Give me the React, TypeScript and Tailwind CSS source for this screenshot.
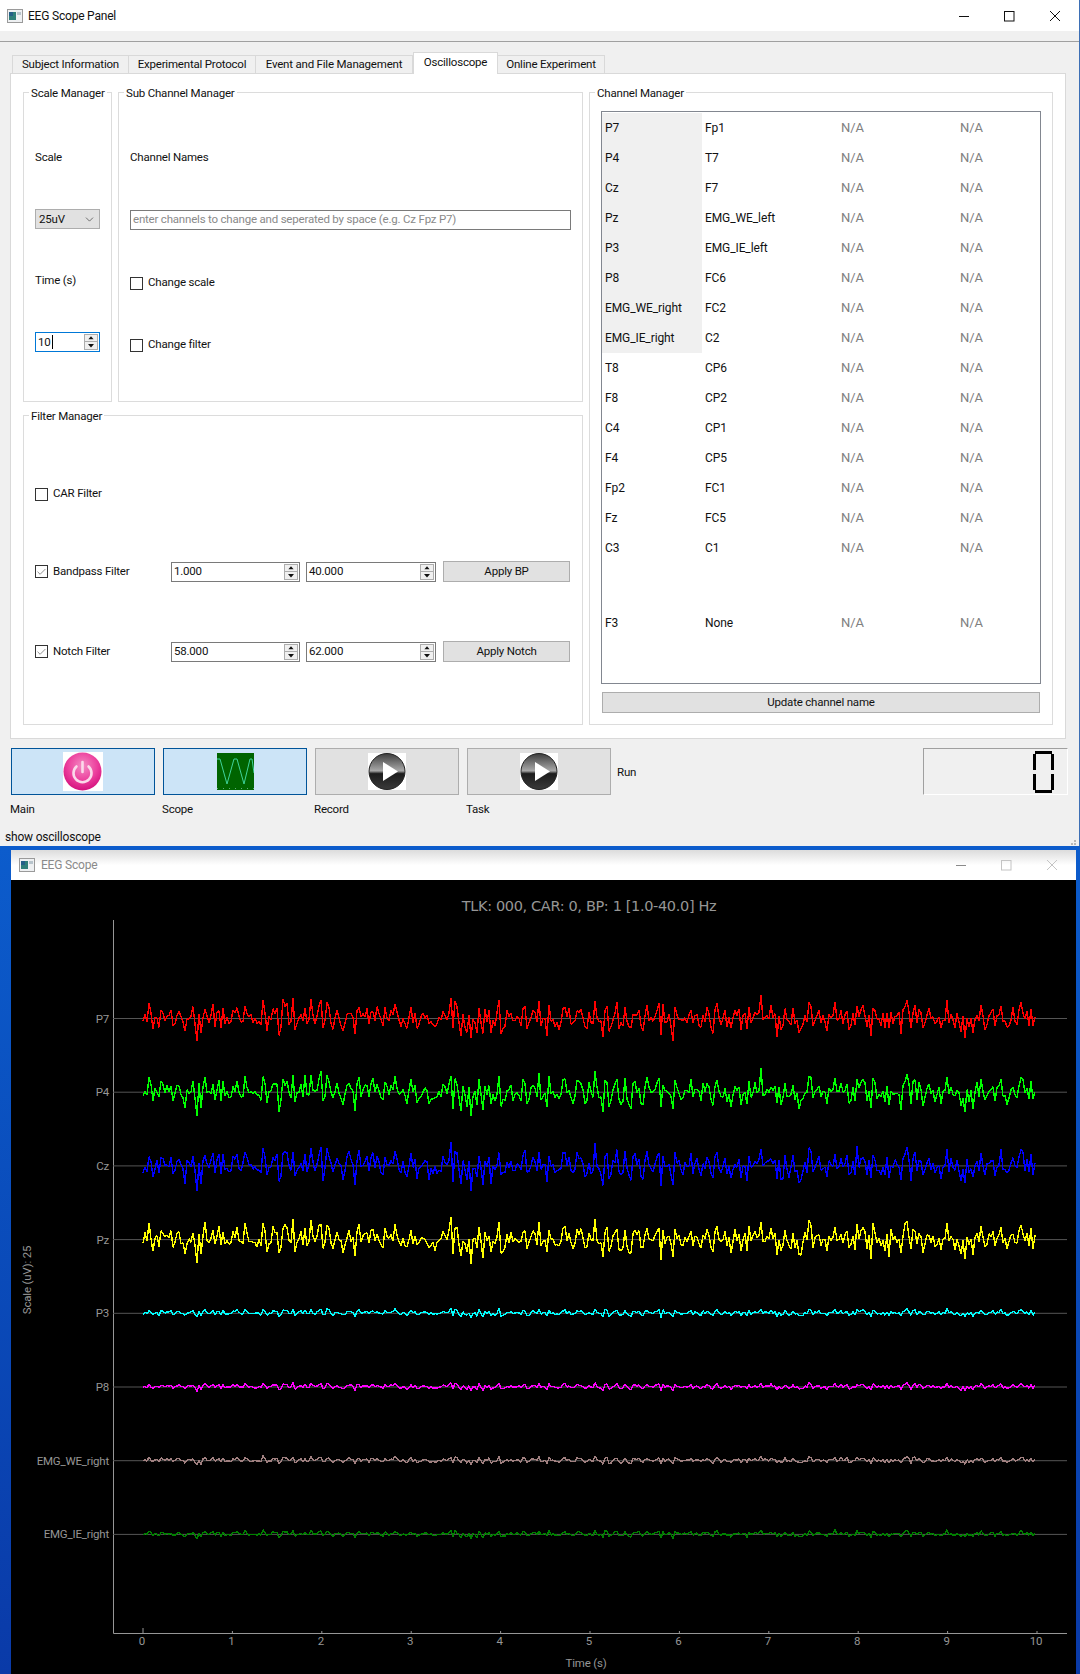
import { Check, ChevronDown } from 'lucide-react'

const channels = [
  ['P7', 'Fp1'], ['P4', 'T7'], ['Cz', 'F7'], ['Pz', 'EMG_WE_left'], ['P3', 'EMG_IE_left'], ['P8', 'FC6'],
  ['EMG_WE_right', 'FC2'], ['EMG_IE_right', 'C2'], ['T8', 'CP6'], ['F8', 'CP2'], ['C4', 'CP1'], ['F4', 'CP5'],
  ['Fp2', 'FC1'], ['Fz', 'FC5'], ['C3', 'C1'], ['F3', 'None'],
]

const traces = [
  { name: 'P7', color: '#ff0000', gain: 1, noise: 0.3 },
  { name: 'P4', color: '#00ff00', gain: 1, noise: 0.35 },
  { name: 'Cz', color: '#0000ff', gain: 1, noise: 0.35 },
  { name: 'Pz', color: '#ffff00', gain: 1, noise: 0.3 },
  { name: 'P3', color: '#00ffff', gain: 0.22, noise: 0.3 },
  { name: 'P8', color: '#ff00ff', gain: 0.2, noise: 0.3 },
  { name: 'EMG_WE_right', color: '#a08080', gain: 0.2, noise: 0.35 },
  { name: 'EMG_IE_right', color: '#008000', gain: 0.2, noise: 0.35 },
]

function rng(seed: number) {
  let a = seed
  return () => {
    a = (a + 0x6d2b79f5) | 0
    let t = Math.imul(a ^ (a >>> 15), 1 | a)
    t = (t + Math.imul(t ^ (t >>> 7), 61 | t)) ^ t
    return ((t ^ (t >>> 14)) >>> 0) / 4294967296
  }
}

function gauss(r: () => number) {
  return (r() + r() + r() + r() - 2) * 1.7
}

const base = (() => {
  const r = rng(11)
  const out: number[] = []
  for (let i = 0; i < 447; i++) {
    let v = gauss(r) * 8
    if (r() < 0.07) v += r() < 0.7 ? 13 : -10
    out.push(Math.max(-18, Math.min(23, v)))
  }
  return out
})()

function tracePoints(row: number, gain: number, noise: number) {
  const r = rng(100 + row)
  const y = 138 + row * 73.7
  return base
    .map((v, i) => `${132 + i * 2},${(y + (v + gauss(r) * 7 * noise) * gain).toFixed(1)}`)
    .join(' ')
}

function WindowIcon() {
  return (
    <svg width="16" height="14" viewBox="0 0 16 14" className="shrink-0">
      <rect x="0.5" y="0.5" width="15" height="13" fill="#eef0f2" stroke="#9a9a9a" />
      <rect x="2" y="3" width="7" height="8" fill="#2f7f7a" />
      <rect x="2" y="3" width="4" height="4" fill="#245f88" />
      <rect x="10" y="3" width="4" height="3" fill="#b8c4cc" />
    </svg>
  )
}

function WindowControls({ muted }: { muted?: boolean }) {
  const c = muted ? '#c4c4c4' : '#111111'
  return (
    <svg width="102" height="12" viewBox="0 0 102 12" className="shrink-0">
      <line x1="0" y1="6.5" x2="10" y2="6.5" stroke={muted ? '#8a8a8a' : c} />
      <rect x="45.5" y="1.5" width="9.5" height="9.5" fill="none" stroke={c} />
      <path d="M91 1l10 10M101 1L91 11" fill="none" stroke={c} />
    </svg>
  )
}

function GroupBox({ title, className, children }: { title: string; className: string; children: React.ReactNode }) {
  return (
    <div className={`relative border border-[#dcdcdc] ${className}`}>
      <span className="absolute -top-[8px] left-[5px] whitespace-nowrap bg-white px-[2px] leading-4">{title}</span>
      {children}
    </div>
  )
}

function CheckBox({ label, checked }: { label: string; checked?: boolean }) {
  return (
    <div className="flex items-center gap-[5px]">
      <span className="flex h-[13px] w-[13px] items-center justify-center border border-[#333333] bg-white">
        {checked && <Check size={12} strokeWidth={1.2} className="text-[#333333]" />}
      </span>
      <span>{label}</span>
    </div>
  )
}

function SpinBox({ value, className, focus }: { value: string; className: string; focus?: boolean }) {
  return (
    <div className={`flex h-5 items-center justify-between border pl-[2px] pr-[1px] ${focus ? 'border-[#0078d7]' : 'border-[#7a7a7a]'} ${className}`}>
      <span className="flex items-center">
        {value}
        {focus && <span className="ml-px h-[14px] w-px bg-black" />}
      </span>
      <span className="flex h-4 w-[14px] flex-col border border-[#adadad] bg-[#f0f0f0]">
        <svg viewBox="0 0 12 7" className="h-[7px] w-full border-b border-[#adadad]"><path d="M6 1.5l3 3.5H3z" fill="#111" /></svg>
        <svg viewBox="0 0 12 7" className="h-[7px] w-full"><path d="M6 5.5L3 2h6z" fill="#111" /></svg>
      </span>
    </div>
  )
}

function PushButton({ label, className }: { label: string; className: string }) {
  return <div className={`flex items-center justify-center border border-[#adadad] bg-[#e1e1e1] ${className}`}>{label}</div>
}

function PowerIcon() {
  return (
    <svg width="40" height="39" viewBox="0 0 40 39">
      <defs>
        <radialGradient id="pink" cx="50%" cy="35%" r="65%">
          <stop offset="0%" stopColor="#f48cc4" />
          <stop offset="60%" stopColor="#ec3f9d" />
          <stop offset="100%" stopColor="#d4127e" />
        </radialGradient>
      </defs>
      <rect width="40" height="39" fill="#ffffff" />
      <circle cx="19.5" cy="19.5" r="19" fill="url(#pink)" />
      <path d="M13.5 14.5a9 9 0 1 0 12 0" fill="none" stroke="#fbd9ea" strokeWidth="2.6" strokeLinecap="round" />
      <line x1="19.5" y1="10" x2="19.5" y2="20" stroke="#fbd9ea" strokeWidth="2.6" strokeLinecap="round" />
    </svg>
  )
}

function ScopeIcon() {
  return (
    <svg width="37" height="37" viewBox="0 0 37 37">
      <rect width="37" height="37" fill="#006400" />
      <path d="M0 6L3 6L10 31L17 6L20 6L27 31L33 6L35 6L37 20" fill="none" stroke="#3fd29a" strokeWidth="1" />
      <line x1="0" y1="35.5" x2="37" y2="35.5" stroke="#5da97a" strokeDasharray="1 5" />
    </svg>
  )
}

function PlayIcon({ id }: { id: string }) {
  return (
    <svg width="38" height="37" viewBox="0 0 38 37">
      <defs>
        <linearGradient id={id} x1="0" y1="0" x2="0" y2="1">
          <stop offset="0%" stopColor="#3c3c3c" />
          <stop offset="48%" stopColor="#a8a8a8" />
          <stop offset="56%" stopColor="#1c1c1c" />
          <stop offset="100%" stopColor="#3a3a3a" />
        </linearGradient>
      </defs>
      <rect width="38" height="37" fill="#ffffff" />
      <circle cx="19" cy="18.5" r="18" fill={`url(#${id})`} stroke="#222222" strokeWidth="1" />
      <polygon points="15,9 30,18.5 15,28" fill="#ffffff" />
    </svg>
  )
}

function ToolButton({ label, active, children }: { label: string; active?: boolean; children: React.ReactNode }) {
  return (
    <div className="flex w-[144px] flex-col">
      <div className={`flex h-[47px] items-center justify-center border ${active ? 'border-[#005499] bg-[#cce4f7]' : 'border-[#adadad] bg-[#e1e1e1]'}`}>
        {children}
      </div>
      <span className="-ml-[1px] mt-[6px] leading-4">{label}</span>
    </div>
  )
}

function Scope() {
  return (
    <svg width="1065" height="794" viewBox="0 0 1065 794" className="bg-black font-['Roboto',sans-serif]">
      <text x="578" y="31" textAnchor="middle" fontSize="14.5" fill="#969696" className="font-['DejaVu_Sans',sans-serif] tracking-[-0.35px]">
        TLK: 000, CAR: 0, BP: 1 [1.0-40.0] Hz
      </text>
      <polyline points="102.5,40 102.5,753.5 1056,753.5" fill="none" stroke="#969696" />
      {Array.from({ length: 11 }, (_, i) => {
        const x = 132 + i * 89.4
        return (
          <g key={i}>
            <line x1={x} y1={i === 0 ? 748 : 751} x2={x} y2="753" stroke="#969696" />
            <text x={x - 1} y="765" textAnchor="middle" fontSize="11.5" fill="#969696">{i}</text>
          </g>
        )
      })}
      {traces.map((t, i) => {
        const y = 138.5 + i * 73.7
        return (
          <g key={t.name}>
            <line x1="102" y1={y} x2="1056" y2={y} stroke="#555555" />
            <text x="98" y={y + 4} textAnchor="end" fontSize="11.5" fill="#969696">{t.name}</text>
            <polyline points={tracePoints(i, t.gain, t.noise)} fill="none" stroke={t.color} strokeWidth="1.4" strokeLinejoin="bevel" shapeRendering="crispEdges" />
          </g>
        )
      })}
      <text x="575" y="787" textAnchor="middle" fontSize="11.5" fill="#969696">Time (s)</text>
      <text transform="translate(20 400) rotate(-90)" textAnchor="middle" fontSize="11.5" fill="#969696">Scale (uV): 25</text>
    </svg>
  )
}

export default function App() {
  return (
    <div className="flex h-[1674px] w-[1080px] flex-col overflow-hidden bg-[#0b48b8] font-['Roboto',sans-serif] text-[11.5px] tracking-[-0.2px] text-[#111111]">
      {/* Main panel window */}
      <div className="relative h-[846px] shrink-0 border-r border-[#3d6fb5] bg-[#f0f0f0]">
        <div className="flex h-[31px] items-center bg-white pl-[7px] pr-[18px]">
          <WindowIcon />
          <span className="ml-[5px] text-[12px]">EEG Scope Panel</span>
          <span className="ml-auto"><WindowControls /></span>
        </div>
        <div className="h-[11px] border-b border-[#a0a0a0]" />

        {/* Tabs */}
        <div className="relative z-10 ml-[12px] flex h-[32px] items-end">
          <div className="flex h-[19px] w-[117px] items-center justify-center border border-b-0 border-[#d9d9d9]">Subject Information</div>
          <div className="flex h-[19px] w-[127px] items-center justify-center border border-b-0 border-l-0 border-[#d9d9d9]">Experimental Protocol</div>
          <div className="flex h-[19px] w-[157px] items-center justify-center border border-b-0 border-l-0 border-[#d9d9d9]">Event and File Management</div>
          <div className="flex h-[22px] w-[85px] items-center justify-center border border-b-0 border-[#d9d9d9] bg-white pb-[2px]">Oscilloscope</div>
          <div className="flex h-[19px] w-[107px] items-center justify-center border border-b-0 border-l-0 border-[#d9d9d9]">Online Experiment</div>
        </div>

        <div className="-mt-px ml-[10px] flex h-[666px] w-[1056px] border border-[#d9d9d9] bg-white pl-[12px] pt-[18px]">
          <div className="flex w-[560px] flex-col gap-[13px]">
            <div className="flex gap-[6px]">
              <GroupBox title="Scale Manager" className="h-[310px] w-[89px]">
                <div className="grid grid-rows-[repeat(4,61.5px)] items-center pl-[11px] pt-[34px]">
                  <span>Scale</span>
                  <div className="flex h-5 w-[65px] items-center justify-between border border-[#adadad] bg-[#e1e1e1] pl-[3px] pr-[3px]">
                    25uV <ChevronDown size={13} strokeWidth={1} />
                  </div>
                  <span>Time (s)</span>
                  <SpinBox value="10" focus className="w-[65px]" />
                </div>
              </GroupBox>
              <GroupBox title="Sub Channel Manager" className="h-[310px] w-[465px]">
                <div className="grid grid-rows-[62px_62px_64px_60px] items-center pl-[11px] pt-[34px]">
                  <span>Channel Names</span>
                  <div className="flex h-5 w-[441px] items-center border border-[#7a7a7a] pl-[2px] text-[#8a8a8a]">
                    enter channels to change and seperated by space (e.g. Cz Fpz P7)
                  </div>
                  <CheckBox label="Change scale" />
                  <CheckBox label="Change filter" />
                </div>
              </GroupBox>
            </div>
            <GroupBox title="Filter Manager" className="h-[310px] w-[560px]">
              <div className="grid grid-cols-[130px_129px_130px_127px] grid-rows-[80px_75px_85px] items-center gap-x-[6px] pl-[11px] pt-[38px]">
                <div className="col-span-4"><CheckBox label="CAR Filter" /></div>
                <CheckBox label="Bandpass Filter" checked />
                <SpinBox value="1.000" className="w-[129px]" />
                <SpinBox value="40.000" className="w-[130px]" />
                <PushButton label="Apply BP" className="ml-px h-[21px] w-[127px]" />
                <CheckBox label="Notch Filter" checked />
                <SpinBox value="58.000" className="w-[129px]" />
                <SpinBox value="62.000" className="w-[130px]" />
                <PushButton label="Apply Notch" className="ml-px h-[21px] w-[127px]" />
              </div>
            </GroupBox>
          </div>

          <GroupBox title="Channel Manager" className="ml-[6px] h-[633px] w-[464px]">
            <div className="ml-[11px] mt-[18px] flex h-[573px] w-[440px] flex-col border border-[#828790] pt-px text-[12px] tracking-[-0.1px]">
              {channels.map(([a, b], i) => (
                <div key={a} className={`grid grid-cols-[100px_136px_119px_1fr] items-center ${i === 15 ? 'flex-1' : 'h-[30px]'}`}>
                  <span className={`flex h-full items-center pl-[3px] ${i < 8 ? 'bg-[#f0f0f0]' : ''}`}>{a}</span>
                  <span className="pl-[3px]">{b}</span>
                  <span className="pl-[3px] text-[13px] text-[#808080]">N/A</span>
                  <span className="pl-[3px] text-[13px] text-[#808080]">N/A</span>
                </div>
              ))}
            </div>
            <PushButton label="Update channel name" className="ml-[12px] mt-[8px] h-[21px] w-[438px]" />
          </GroupBox>
        </div>

        {/* Tool buttons */}
        <div className="mt-[9px] flex gap-[8px] pl-[11px] pr-[11px]">
          <ToolButton label="Main" active><PowerIcon /></ToolButton>
          <ToolButton label="Scope" active><ScopeIcon /></ToolButton>
          <ToolButton label="Record"><PlayIcon id="playA" /></ToolButton>
          <ToolButton label="Task"><PlayIcon id="playB" /></ToolButton>
          <span className="-ml-[2px] mt-[16px] h-4 leading-4">Run</span>
          <div className="ml-auto flex h-[47px] w-[145px] items-center justify-end border border-[#ffffff] border-l-[#a0a0a0] border-t-[#a0a0a0] pr-[13px]">
            <svg width="21" height="42" viewBox="0 0 21 42">
              <g stroke="#000000" strokeWidth="3" fill="none">
                <line x1="2" y1="1.5" x2="19" y2="1.5" />
                <line x1="2" y1="40.5" x2="19" y2="40.5" />
                <line x1="1.5" y1="3" x2="1.5" y2="19" />
                <line x1="19.5" y1="3" x2="19.5" y2="19" />
                <line x1="1.5" y1="23" x2="1.5" y2="39" />
                <line x1="19.5" y1="23" x2="19.5" y2="39" />
              </g>
            </svg>
          </div>
        </div>
        <div className="mt-[12px] pl-[5px] text-[12px] leading-4">show oscilloscope</div>
        <div className="absolute bottom-px right-[3px] grid grid-cols-3 gap-px">
          {[0, 1, 2, 3, 4, 5].map((i) => (
            <span key={i} className={`h-[2px] w-[2px] ${i === 0 || i === 1 || i === 3 ? 'bg-transparent' : 'bg-[#b8b8b8]'}`} />
          ))}
        </div>
      </div>

      {/* Scope window */}
      <div className="flex-1 bg-gradient-to-b from-[#0c5ccc] to-[#0a3aa8] pl-[11px] pr-[4px] pt-[4px]">
        <div className="flex h-[30px] items-center bg-gradient-to-b from-[#dcdcdc] via-white to-white pl-[8px] pr-[18px]">
          <WindowIcon />
          <span className="ml-[6px] text-[12px] text-[#8a8a8a]">EEG Scope</span>
          <span className="ml-auto"><WindowControls muted /></span>
        </div>
        <Scope />
      </div>
    </div>
  )
}
